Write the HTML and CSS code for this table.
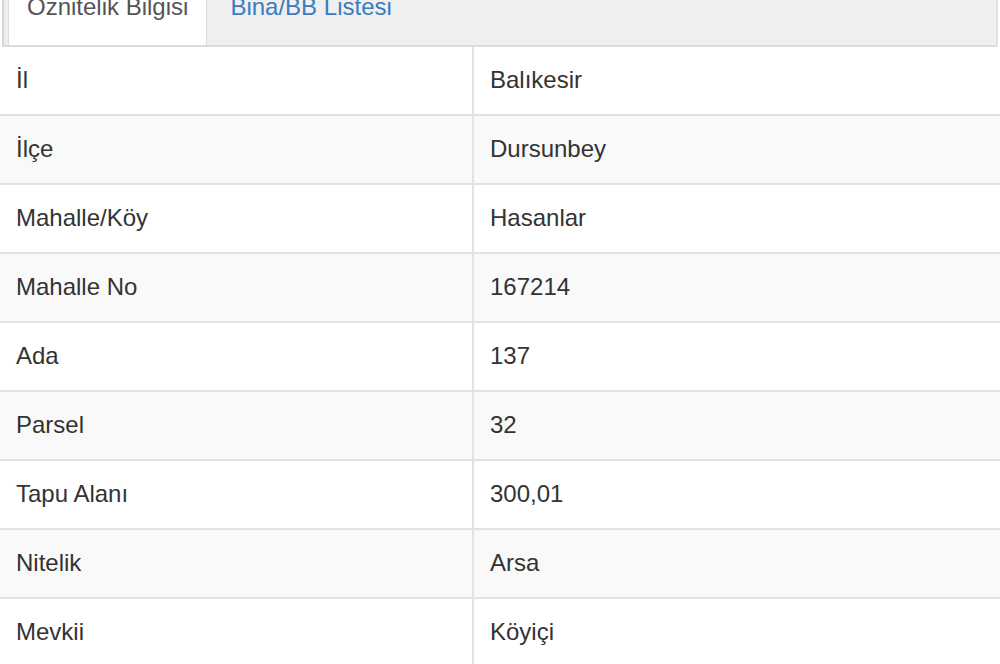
FILE: index.html
```html
<!DOCTYPE html>
<html lang="tr">
<head>
<meta charset="utf-8">
<title>Öznitelik Bilgisi</title>
<link rel="stylesheet" href="styles.css">
</head>
<body>
<div class="panel">
  <div class="tabs">
    <div class="tab active">Öznitelik Bilgisi</div>
    <div class="tab">Bina/BB Listesi</div>
  </div>
  <table class="attr">
    <tbody>
      <tr><td class="k">İl</td><td>Balıkesir</td></tr>
      <tr><td class="k">İlçe</td><td>Dursunbey</td></tr>
      <tr><td class="k">Mahalle/Köy</td><td>Hasanlar</td></tr>
      <tr><td class="k">Mahalle No</td><td>167214</td></tr>
      <tr><td class="k">Ada</td><td>137</td></tr>
      <tr><td class="k">Parsel</td><td>32</td></tr>
      <tr><td class="k">Tapu Alanı</td><td>300,01</td></tr>
      <tr><td class="k">Nitelik</td><td>Arsa</td></tr>
      <tr><td class="k">Mevkii</td><td>Köyiçi</td></tr>
    </tbody>
  </table>
</div>
</body>
</html>
```

FILE: styles.css
```css
html, body {
  margin: 0;
  padding: 0;
  background: #fff;
  overflow: hidden;
}
body {
  font-family: "Liberation Sans", Arial, sans-serif;
  font-size: 24px;
  color: #333;
}
.panel {
  width: 1000px;
}
.tabs {
  display: flex;
  align-items: flex-end;
  height: 45px;
  background: #efefef;
  border-bottom: 2px solid #dcdcdc;
  border-left: 2px solid #d6d6d6;
  border-right: 2px solid #e2e2e2;
  margin: 0 2px 0 2px;
  padding-left: 4px;
}
.tab {
  line-height: 28px;
  padding: 0 23px 24px 23px;
  color: #3a7cc0;
  white-space: nowrap;
}
.tab.active {
  background: #fff;
  color: #555;
  border-left: 1px solid #ddd;
  border-right: 1px solid #ddd;
  padding: 0 18px 24px 18px;
}
.attr {
  width: 1000px;
  border-collapse: collapse;
  table-layout: fixed;
}
.attr td {
  height: 65px;
  padding: 0 16px 2px 16px;
  border-top: 2px solid #e2e2e2;
  vertical-align: middle;
  line-height: 28px;
}
.attr td.k {
  width: 440px;
  border-right: 2px solid #e2e2e2;
}
.attr tr:nth-child(even) td {
  background: #f9f9f9;
}
.attr tr:first-child td {
  border-top: none;
}
```
